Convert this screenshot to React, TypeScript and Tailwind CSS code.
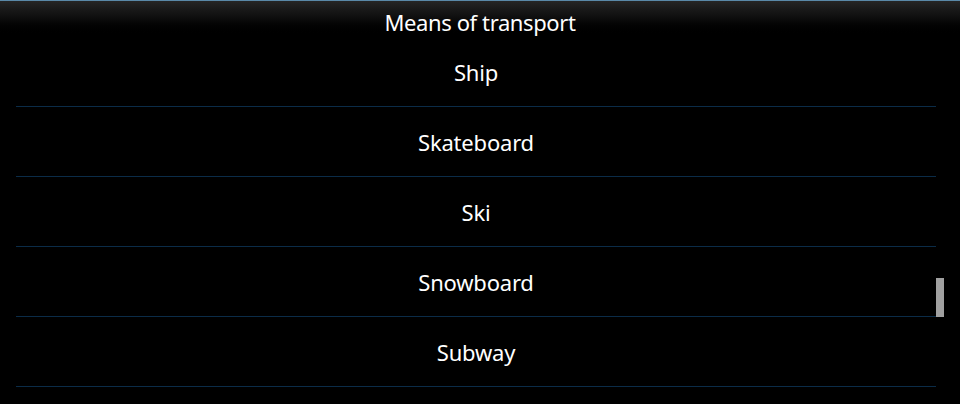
import React from "react";

const items = ["Ship", "Skateboard", "Ski", "Snowboard", "Subway"];

export default function App() {
  return (
    <div
      className="relative w-[960px] h-[404px] overflow-hidden bg-black text-white"
      style={{ fontFamily: '"Noto Sans", "Open Sans", sans-serif' }}
    >
      <div className="h-[37px] border-t border-[#5a89a8] bg-gradient-to-b from-[#262626] via-[#0c0c0c] to-black flex items-start justify-center">
        <span className="text-[22px] leading-none pt-[10px] tracking-[-0.4px]">Means of transport</span>
      </div>
      <div className="flex flex-col pl-[16px] pr-[24px]">
        {items.map((it) => (
          <div
            key={it}
            className="h-[70px] border-b border-[#0b2c48] flex items-center justify-center"
          >
            <span className="text-[22px] leading-none pt-[1px] tracking-[-0.2px]">{it}</span>
          </div>
        ))}
      </div>
      <div className="absolute left-[936px] top-[278px] w-[8px] h-[39px] bg-[#a0a0a0]" />
    </div>
  );
}
